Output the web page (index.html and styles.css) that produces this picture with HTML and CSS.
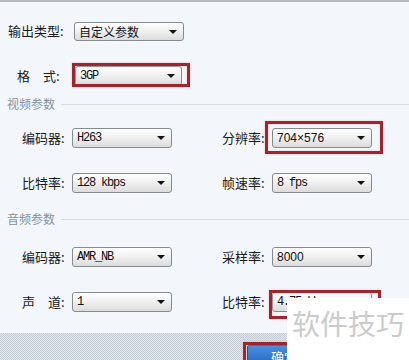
FILE: index.html
```html
<!DOCTYPE html>
<html lang="zh-CN">
<head>
    <meta charset="UTF-8">
    <title>输出设置</title>
    <link rel="stylesheet" href="styles.css">
</head>
<body>

<div class="window">
    <div class="topline"></div>

    <div class="row row-type">
        <span class="label label-wide">输出类型:</span>
        <div class="sel sel-wide cjk">自定义参数</div>
    </div>

    <div class="row row-format">
        <span class="label label-format">格<span class="gap"></span>式:</span>
        <div class="sel sel-format mono">3GP</div>
    </div>

    <div class="title"><span>视频参数</span><i></i></div>

    <div class="grid grid-first">
        <div class="field">
            <span class="label">编码器:</span>
            <div class="sel mono">H263</div>
        </div>
        <div class="field">
            <span class="label">分辨率:</span>
            <div class="sel sans">704×576</div>
        </div>
        <div class="field">
            <span class="label">比特率:</span>
            <div class="sel mono">128 kbps</div>
        </div>
        <div class="field">
            <span class="label">帧速率:</span>
            <div class="sel mono">8 fps</div>
        </div>
    </div>

    <div class="title title-audio"><span>音频参数</span><i></i></div>

    <div class="grid grid-audio">
        <div class="field">
            <span class="label">编码器:</span>
            <div class="sel mono">AMR_NB</div>
        </div>
        <div class="field">
            <span class="label">采样率:</span>
            <div class="sel sans">8000</div>
        </div>
        <div class="field">
            <span class="label">声<span class="gap"></span>道:</span>
            <div class="sel mono">1</div>
        </div>
        <div class="field">
            <span class="label">比特率:</span>
            <div class="sel mono">4.75 kbps</div>
        </div>
    </div>

    <div class="bar">
        <button class="ok">确定</button>
    </div>

    <!-- red annotation frames -->
    <div class="mark mark-format"></div>
    <div class="mark mark-res"></div>
    <div class="mark mark-rate"></div>
    <div class="mark mark-ok"></div>

    <div class="watermark">软件技巧</div>
</div>

</body>
</html>
```

FILE: styles.css
```css
body {
    margin: 0;
    font-family: "Noto Sans CJK SC", "Noto Sans", sans-serif;
    background-color: #f3f7fb;
}

.window {
    position: relative;
    width: 409px;
    height: 360px;
    overflow: hidden;
    background: #f3f7fb;
}

.topline {
    height: 2px;
    background: #b7bbc1;
}

.row {
    display: flex;
    align-items: center;
    height: 20px;
}

.row-type {
    margin-top: 19px;
    padding-left: 8px;
}

.row-format {
    margin-top: 25px;
    padding-left: 17px;
}

.label {
    font-size: 13px;
    color: #1a1a1a;
    width: 50px;
    white-space: nowrap;
    line-height: 20px;
}

.label-wide {
    width: 66px;
}

.label-format {
    width: 58px;
}

.gap {
    display: inline-block;
    width: 13px;
}

.sel {
    position: relative;
    box-sizing: border-box;
    width: 100px;
    height: 20px;
    border: 1px solid #868b92;
    border-radius: 3px;
    background: linear-gradient(#ffffff, #f1f1f1 45%, #dcdcdc);
    color: #111;
    padding-left: 4px;
    line-height: 18px;
    white-space: nowrap;
    overflow: hidden;
}

.sel::after {
    content: "";
    position: absolute;
    right: 6px;
    top: 7px;
    border-left: 4px solid transparent;
    border-right: 4px solid transparent;
    border-top: 4px solid #111;
}

.sel-wide {
    width: 110px;
    height: 19px;
}

.sel-format {
    width: 107px;
}

.cjk {
    font-size: 12px;
}

.mono {
    font-family: "Liberation Mono", monospace;
    font-size: 12px;
    letter-spacing: -1.2px;
}

.sans {
    font-family: "Liberation Sans", sans-serif;
    font-size: 12px;
}

.title {
    display: flex;
    align-items: center;
    height: 14px;
    margin-top: 11px;
    padding-left: 7px;
}

.title span {
    font-size: 12px;
    color: #84929e;
    line-height: 14px;
}

.title i {
    flex: 1;
    height: 1px;
    margin-left: 6px;
    background: #d6dce3;
}

.title-audio {
    margin-top: 19px;
}

.grid {
    display: grid;
    grid-template-columns: 200px 150px;
    row-gap: 25px;
    padding-left: 22px;
}

.grid-first {
    margin-top: 17px;
}

.grid-audio {
    margin-top: 21px;
}

.field {
    display: flex;
    align-items: center;
    height: 20px;
}

.bar {
    margin-top: 21px;
    height: 27px;
    padding: 12px 0 0 247px;
    box-sizing: border-box;
    background: repeating-conic-gradient(#c6ccd4 0 25%, #e2e6eb 0 50%) 0 0 / 2px 2px;
}

.ok {
    display: block;
    width: 60px;
    height: 24px;
    border: 1px solid #1c4f95;
    border-radius: 2px;
    background: linear-gradient(#4a8ee0, #1f62bd);
    color: #fff;
    font-family: "Noto Sans CJK SC", sans-serif;
    font-size: 13px;
    text-align: left;
    padding: 0 0 0 23px;
    line-height: 20px;
}

.mark {
    position: absolute;
    box-sizing: border-box;
    border: 3px solid #9c2731;
    box-shadow: 0 0 2px #f2b4b6, inset 0 0 2px #f2b4b6;
}

.mark-format {
    left: 72px;
    top: 63px;
    width: 118px;
    height: 24px;
}

.mark-res {
    left: 265px;
    top: 121px;
    width: 118px;
    height: 33px;
}

.mark-rate {
    left: 269px;
    top: 290px;
    width: 112px;
    height: 29px;
}

.mark-ok {
    left: 243px;
    top: 342px;
    width: 70px;
    height: 30px;
}

.watermark {
    position: absolute;
    left: 287px;
    top: 298px;
    width: 122px;
    height: 62px;
    background: #fff;
    color: #cbcbcb;
    font-size: 28px;
    line-height: 50px;
    padding-left: 5px;
    box-sizing: border-box;
    white-space: nowrap;
}
```
